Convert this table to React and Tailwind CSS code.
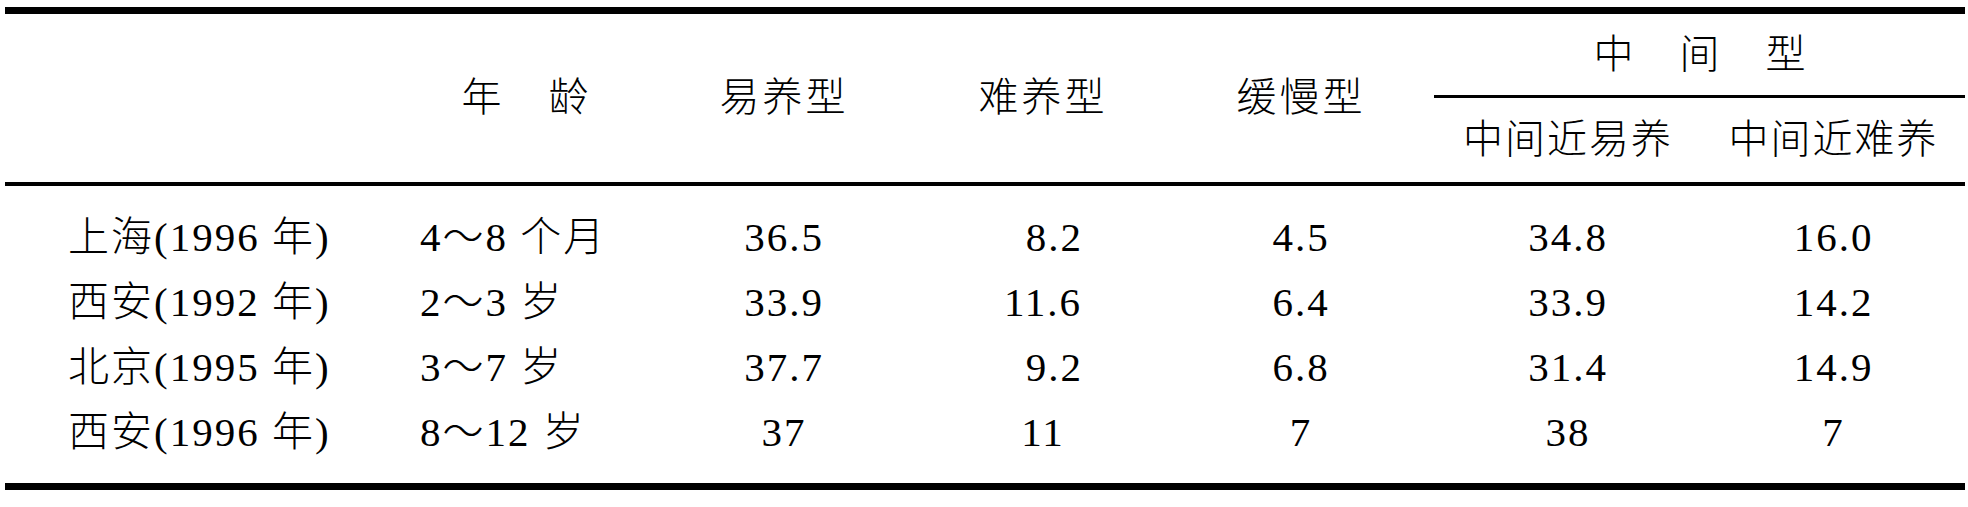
import React from "react";

const rows = [
  ["上海(1996 年)", "4～8 个月", "36.5", "\u20028.2", "4.5", "34.8", "16.0"],
  ["西安(1992 年)", "2～3 岁", "33.9", "11.6", "6.4", "33.9", "14.2"],
  ["北京(1995 年)", "3～7 岁", "37.7", "\u20029.2", "6.8", "31.4", "14.9"],
  ["西安(1996 年)", "8～12 岁", "37", "11", "7", "38", "7"],
];

const cols = "grid grid-cols-[395px_250px_268px_250px_266px_268px_263px]";

const App = () => {
  return (
    <div
      className="min-h-screen bg-white pt-[7px] text-black text-[40px] leading-none"
      style={{ fontFamily: '"Liberation Serif", "Noto Sans CJK SC", serif' }}
    >
      <div className="ml-[5px] w-[1960px]">
        {/* top rule */}
        <div className="h-[7px] bg-black" />

        {/* HEADER */}
        <div className={`${cols} grid-rows-[81px_3px_84px]`}>
          <div className="row-span-3" />
          <div className="row-span-3 flex items-center justify-center gap-[47px] font-light">
            <span>年</span>
            <span>龄</span>
          </div>
          <div className="row-span-3 flex items-center justify-center font-light tracking-[3px]">易养型</div>
          <div className="row-span-3 flex items-center justify-center font-light tracking-[3px]">难养型</div>
          <div className="row-span-3 flex items-center justify-center font-light tracking-[3px]">缓慢型</div>

          <div className="col-span-2 flex items-center justify-center gap-[46px] font-light">
            <span>中</span>
            <span>间</span>
            <span>型</span>
          </div>
          <div className="col-span-2 bg-black" />
          <div className="flex items-center justify-center font-light tracking-[2px]">中间近易养</div>
          <div className="flex items-center justify-center font-light tracking-[2px]">中间近难养</div>
        </div>

        {/* header rule */}
        <div className="h-[4px] bg-black" />

        {/* BODY */}
        <div className="pt-[19px] pb-[18px]">
          {rows.map((r, i) => (
            <div key={i} className={`${cols} h-[65px] items-center font-light text-[41px] tracking-[2px]`}>
              <div className="pl-[63px] whitespace-pre">{r[0]}</div>
              <div className="pl-[20px] whitespace-pre">{r[1]}</div>
              {r.slice(2).map((v, j) => (
                <div key={j} className="text-center whitespace-pre">
                  {v}
                </div>
              ))}
            </div>
          ))}
        </div>

        {/* bottom rule */}
        <div className="h-[7px] bg-black" />
      </div>
    </div>
  );
};

export default App;
